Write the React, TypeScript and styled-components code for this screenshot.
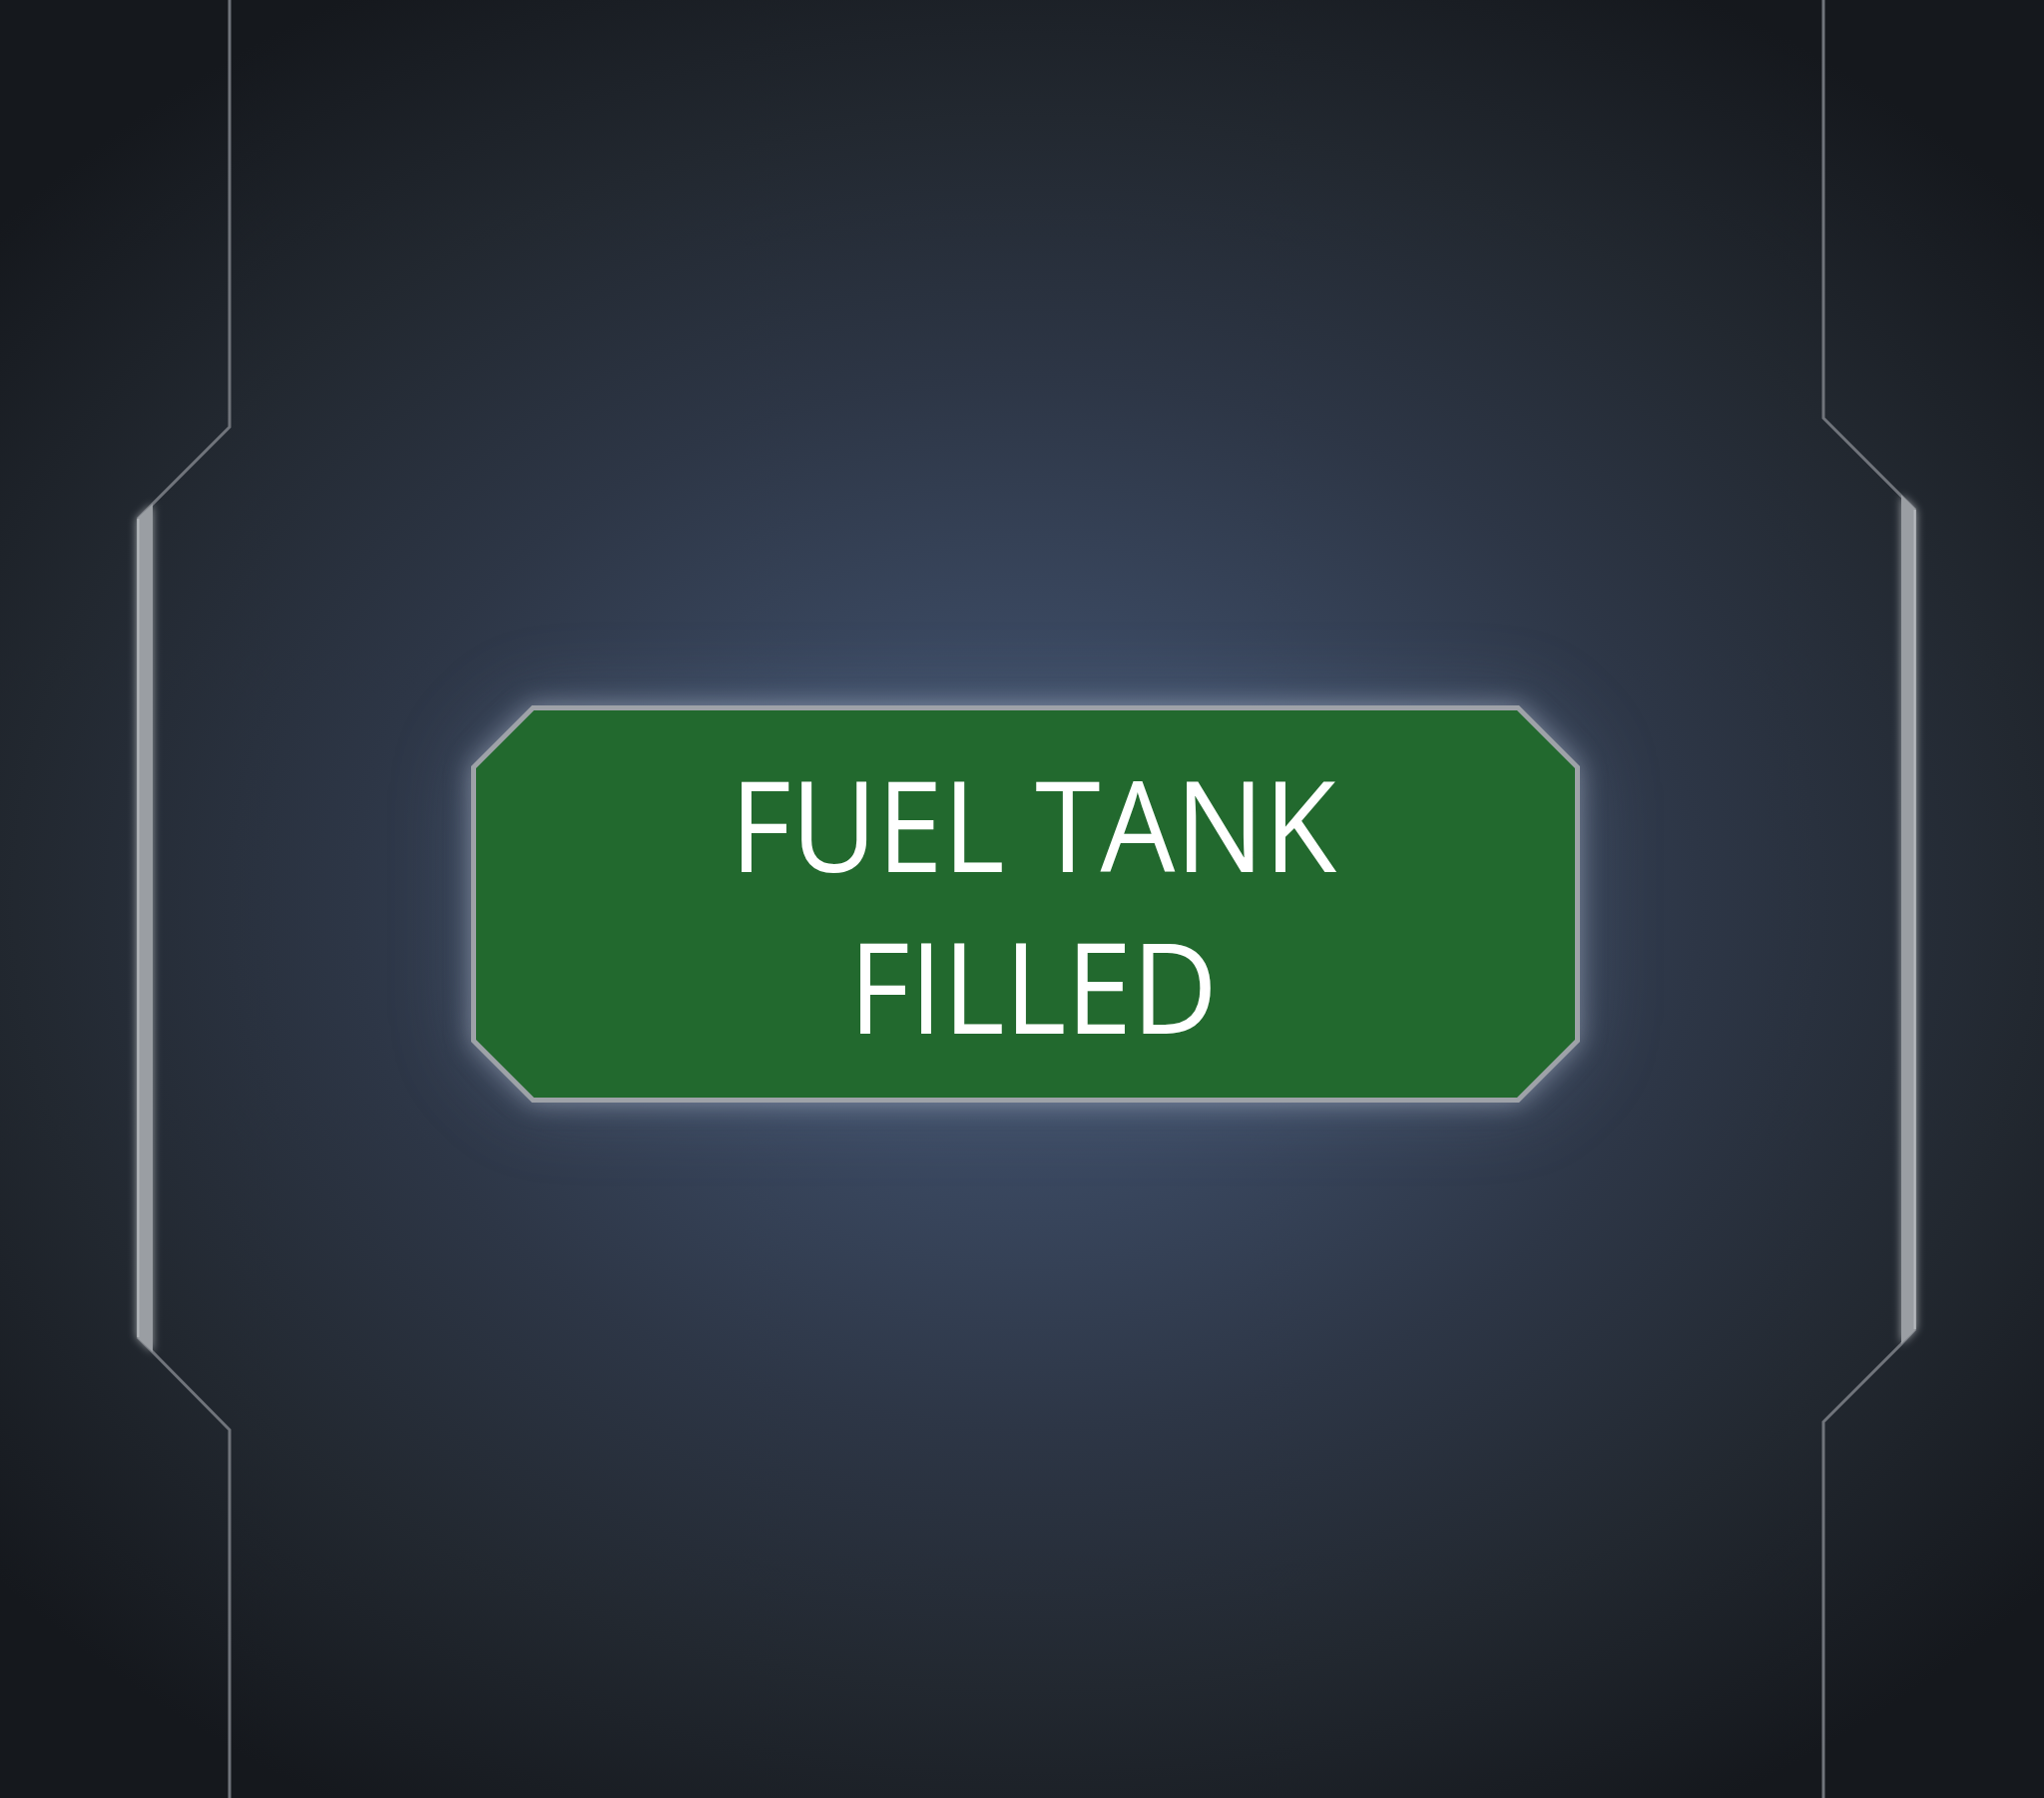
import React from "react";
import styled, { createGlobalStyle } from "styled-components";

const Global = createGlobalStyle`
  html, body { margin: 0; padding: 0; }
  body {
    background: #14171c;
    font-family: "Open Sans", "Noto Sans", sans-serif;
  }
`;

const Page = styled.div`
  width: 100%;
  height: 1802px;
  display: grid;
  grid-template-columns: 240px 1fr 233px;
  overflow: hidden;
  background:
    radial-gradient(ellipse 1350px 1050px at 1028px 905px,
      #42536e 0%, #3a4860 25%, #2d3646 50%, #222830 75%, #15181d 100%);
`;

const FrameSide = styled.svg`
  display: block;
  width: 100%;
  height: 100%;
`;

const Center = styled.main`
  display: flex;
  align-items: center;
  justify-content: center;
  padding-top: 10px;
`;

const PlateGlow = styled.div`
  filter: drop-shadow(0 0 12px rgba(190, 200, 220, 0.5)) drop-shadow(0 0 36px rgba(120, 140, 170, 0.3));
`;

const bevel = (b: number) =>
  `polygon(${b}px 0, calc(100% - ${b}px) 0, 100% ${b}px, 100% calc(100% - ${b}px), calc(100% - ${b}px) 100%, ${b}px 100%, 0 calc(100% - ${b}px), 0 ${b}px)`;

const Plate = styled.div`
  width: 1111px;
  height: 398px;
  box-sizing: border-box;
  padding: 5px;
  background: #9ea2a8;
  clip-path: ${bevel(61)};
  display: flex;
`;

const PlateFace = styled.div`
  flex: 1;
  background: #22692e;
  clip-path: ${bevel(58)};
  display: flex;
  align-items: center;
  justify-content: center;
  padding-left: 16px;
`;

const Label = styled.h1`
  margin: 0;
  color: #ffffff;
  font-family: "Open Sans", "Noto Sans", sans-serif;
  font-weight: 400;
  font-size: 126px;
  line-height: 162px;
  text-align: center;
  letter-spacing: 0;
  transform: scaleX(0.94);
`;

const Line = styled.span`
  display: block;
  white-space: nowrap;
`;

function LeftFrame() {
  return (
    <FrameSide viewBox="0 0 240 1802" preserveAspectRatio="none">
      <defs>
        <filter id="glowL" x="-200%" y="-5%" width="500%" height="110%">
          <feGaussianBlur stdDeviation="4" result="b" />
          <feMerge>
            <feMergeNode in="b" />
            <feMergeNode in="SourceGraphic" />
          </feMerge>
        </filter>
      </defs>
      <polyline
        points="230,0 230,428 138,520"
        fill="none"
        stroke="#70747b"
        strokeWidth="3"
      />
      <polyline
        points="138,1340 153,1355 230,1433 230,1802"
        fill="none"
        stroke="#70747b"
        strokeWidth="3"
      />
      <polygon
        points="137,520 153,505 153,1355 137,1340"
        fill="#9a9ea3"
        filter="url(#glowL)"
      />
      <line x1="138.5" y1="520" x2="138.5" y2="1340" stroke="#b4b7bc" strokeWidth="2" />
    </FrameSide>
  );
}

function RightFrame() {
  return (
    <FrameSide viewBox="0 0 233 1802" preserveAspectRatio="none">
      <defs>
        <filter id="glowR" x="-200%" y="-5%" width="500%" height="110%">
          <feGaussianBlur stdDeviation="4" result="b" />
          <feMerge>
            <feMergeNode in="b" />
            <feMergeNode in="SourceGraphic" />
          </feMerge>
        </filter>
      </defs>
      <polyline
        points="12,0 12,419 104,511"
        fill="none"
        stroke="#70747b"
        strokeWidth="3"
      />
      <polyline
        points="104,1332 90,1347 12,1425 12,1802"
        fill="none"
        stroke="#70747b"
        strokeWidth="3"
      />
      <polygon
        points="90,496 105,511 105,1332 90,1347"
        fill="#9a9ea3"
        filter="url(#glowR)"
      />
      <line x1="103.5" y1="511" x2="103.5" y2="1332" stroke="#b4b7bc" strokeWidth="2" />
    </FrameSide>
  );
}

export default function App() {
  return (
    <>
      <Global />
      <Page>
        <LeftFrame />
        <Center>
          <PlateGlow>
            <Plate>
              <PlateFace>
                <Label>
                  <Line>FUEL TANK</Line>
                  <Line>FILLED</Line>
                </Label>
              </PlateFace>
            </Plate>
          </PlateGlow>
        </Center>
        <RightFrame />
      </Page>
    </>
  );
}
